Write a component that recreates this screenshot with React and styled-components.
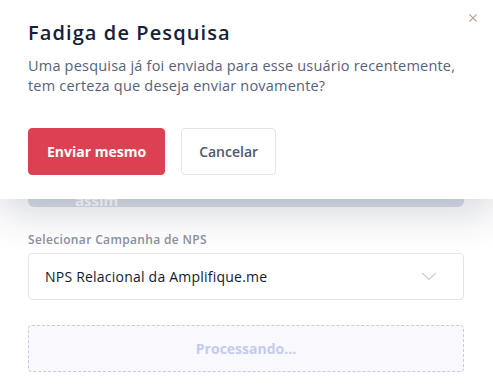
import React from "react";
import styled, { createGlobalStyle } from "styled-components";

const Global = createGlobalStyle`
  html, body { margin: 0; padding: 0; background: #ffffff; }
  body { font-family: "Open Sans", "Noto Sans", sans-serif; width: 493px; height: 390px; overflow: hidden; }
  * { box-sizing: border-box; }
`;

const Page = styled.div`
  position: relative;
  width: 493px;
  height: 390px;
  background: #ffffff;
  overflow: hidden;
`;

const Content = styled.div`
  display: flex;
  flex-direction: column;
  padding: 0 29px 0 28px;
`;

const GhostButton = styled.div`
  margin-top: 150px;
  height: 57px;
  border-radius: 6px;
  background: #dadfea;
  display: flex;
  align-items: flex-end;
  padding: 0 0 0 47px;
  color: #ffffff;
  font-weight: 700;
  font-size: 15px;
  line-height: 14px;
  overflow: hidden;
`;

const Label = styled.div`
  margin-top: 25px;
  font-size: 12px;
  font-weight: 600;
  letter-spacing: 0.35px;
  color: #8b91a0;
  line-height: 16px;
`;

const Select = styled.div`
  margin-top: 5px;
  height: 47px;
  border: 1px solid #e2e5ea;
  border-radius: 4px;
  display: flex;
  align-items: center;
  justify-content: space-between;
  padding: 0 26px 0 16px;
  font-size: 14px;
  font-weight: 500;
  letter-spacing: 0.22px;
  color: #121a2e;
`;

const Processing = styled.div`
  margin-top: 25px;
  height: 47px;
  border: 1px dashed #c3cbe9;
  border-radius: 4px;
  background: #f8f8fd;
  display: flex;
  align-items: center;
  justify-content: center;
  font-size: 14px;
  font-weight: 700;
  color: #c5cbeb;
`;

const Modal = styled.div`
  position: absolute;
  top: 0;
  left: 0;
  width: 493px;
  height: 199px;
  background: #ffffff;
  box-shadow: 0 12px 40px rgba(30, 40, 70, 0.2);
  padding: 21px 28px 0 28px;
  display: flex;
  flex-direction: column;
`;

const Close = styled.div`
  position: absolute;
  top: 13px;
  right: 15px;
  width: 10px;
  height: 10px;
  display: flex;
`;

const Title = styled.h2`
  margin: 0;
  font-size: 20px;
  font-weight: 600;
  letter-spacing: 1.1px;
  color: #16203a;
  line-height: 24px;
`;

const Message = styled.p`
  margin: 11px 0 0 0;
  font-size: 14.5px;
  font-weight: 500;
  letter-spacing: 0.2px;
  color: #586178;
  line-height: 20px;
`;

const Actions = styled.div`
  display: flex;
  gap: 16px;
  margin-top: 32px;
`;

const Button = styled.button`
  height: 47px;
  border-radius: 4px;
  font-family: inherit;
  font-size: 14px;
  padding: 0 ${(p) => (p.$primary ? "18px" : "17px")};
  cursor: pointer;
  border: 1px solid ${(p) => (p.$primary ? "#db4152" : "#e2e5ea")};
  background: ${(p) => (p.$primary ? "#db4152" : "#ffffff")};
  color: ${(p) => (p.$primary ? "#ffffff" : "#4d5873")};
  font-weight: ${(p) => (p.$primary ? 700 : 600)};
`;

export default function App() {
  return (
    <Page>
      <Global />
      <Content>
        <GhostButton>assim</GhostButton>
        <Label>Selecionar Campanha de NPS</Label>
        <Select>
          <span>NPS Relacional da Amplifique.me</span>
          <svg width="16" height="9" viewBox="0 0 16 9">
            <path d="M1 1l7 6.5L15 1" fill="none" stroke="#c9cdd6" strokeWidth="1.2" />
          </svg>
        </Select>
        <Processing>Processando...</Processing>
      </Content>
      <Modal>
        <Close>
          <svg width="10" height="10" viewBox="0 0 10 10">
            <path d="M1.5 1.5l7 7M8.5 1.5l-7 7" stroke="#b9a792" strokeWidth="1.1" />
          </svg>
        </Close>
        <Title>Fadiga de Pesquisa</Title>
        <Message>
          Uma pesquisa já foi enviada para esse usuário recentemente,
          <br />
          tem certeza que deseja enviar novamente?
        </Message>
        <Actions>
          <Button $primary>Enviar mesmo</Button>
          <Button>Cancelar</Button>
        </Actions>
      </Modal>
    </Page>
  );
}
